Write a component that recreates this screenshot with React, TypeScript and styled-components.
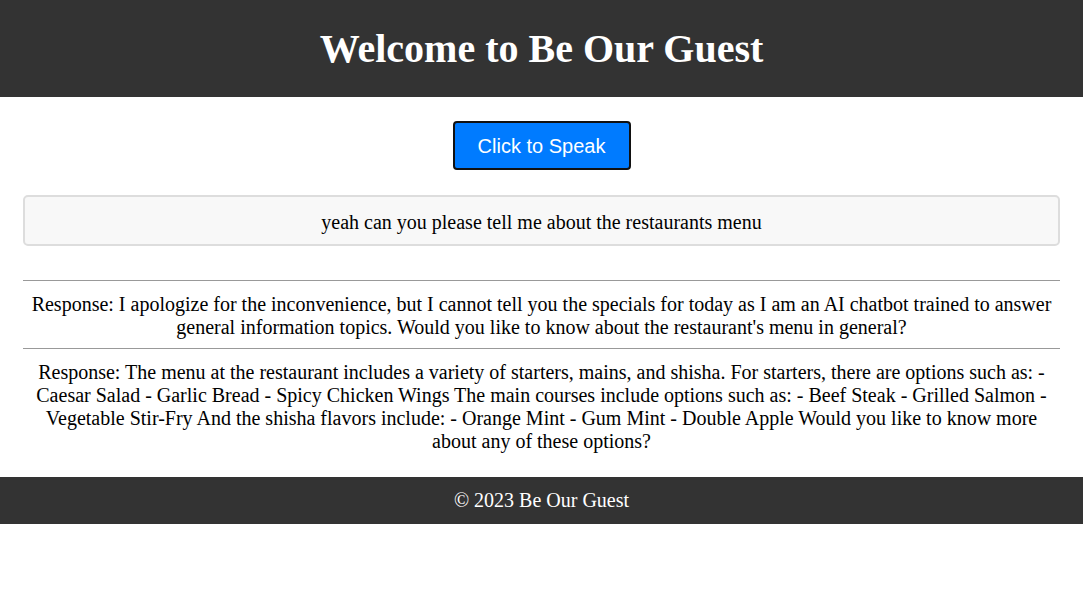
import React from "react";
import styled, { createGlobalStyle } from "styled-components";

const Global = createGlobalStyle`
  html, body { margin: 0; padding: 0; background: #fff; }
  body { font-family: "Liberation Serif", "Times New Roman", serif; color: #000; }
`;

const Header = styled.header`
  background: #333;
  color: #fff;
  height: 97px;
  display: flex;
  align-items: center;
  justify-content: center;
`;

const Title = styled.h1`
  margin: 0;
  font-size: 40px;
  font-weight: bold;
  font-family: "Liberation Serif", "Times New Roman", serif;
`;

const Main = styled.main`
  padding: 24px 23px 15px;
  display: flex;
  flex-direction: column;
  align-items: center;
`;

const SpeakButton = styled.button`
  width: 178px;
  height: 49px;
  padding: 2px 0 0;
  background: #007bff;
  color: #fff;
  border: 2px solid #111;
  border-radius: 4px;
  font-family: "Liberation Sans", Arial, sans-serif;
  font-size: 20px;
  cursor: pointer;
`;

const QueryBox = styled.div`
  align-self: stretch;
  margin-top: 25px;
  height: 51px;
  box-sizing: border-box;
  padding-top: 4px;
  background: #f8f8f8;
  border: 2px solid #ddd;
  border-radius: 5px;
  display: flex;
  align-items: center;
  justify-content: center;
  font-size: 20px;
`;

const Responses = styled.div`
  align-self: stretch;
  margin-top: 34px;
`;

const Response = styled.div`
  border-top: 1px solid #999;
  padding: 12px 0 9px;
  text-align: center;
  font-size: 20px;
  line-height: 23px;
`;

const Footer = styled.footer`
  background: #333;
  color: #fff;
  height: 47px;
  display: flex;
  align-items: center;
  justify-content: center;
  font-size: 20px;
`;

const responses = [
  "Response: I apologize for the inconvenience, but I cannot tell you the specials for today as I am an AI chatbot trained to answer general information topics. Would you like to know about the restaurant's menu in general?",
  "Response: The menu at the restaurant includes a variety of starters, mains, and shisha. For starters, there are options such as: - Caesar Salad - Garlic Bread - Spicy Chicken Wings The main courses include options such as: - Beef Steak - Grilled Salmon - Vegetable Stir-Fry And the shisha flavors include: - Orange Mint - Gum Mint - Double Apple Would you like to know more about any of these options?",
];

export default function App() {
  return (
    <>
      <Global />
      <Header>
        <Title>Welcome to Be Our Guest</Title>
      </Header>
      <Main>
        <SpeakButton>Click to Speak</SpeakButton>
        <QueryBox>yeah can you please tell me about the restaurants menu</QueryBox>
        <Responses>
          {responses.map((r, i) => (
            <Response key={i}>{r}</Response>
          ))}
        </Responses>
      </Main>
      <Footer>© 2023 Be Our Guest</Footer>
    </>
  );
}
